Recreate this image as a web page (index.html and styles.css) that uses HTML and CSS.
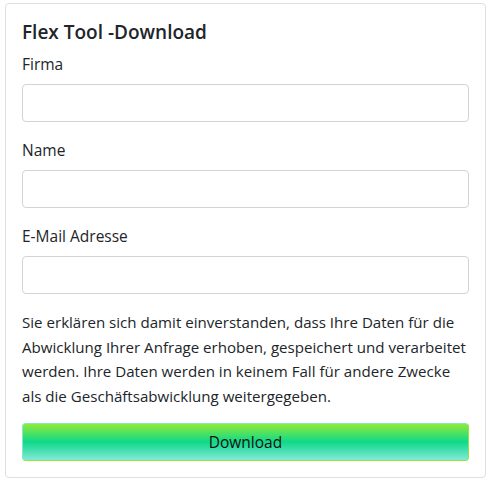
FILE: index.html
```html
<!DOCTYPE html>
<html lang="de">
<head>
<meta charset="utf-8">
<title>Flex Tool -Download</title>
<link rel="stylesheet" href="styles.css">
</head>
<body>
<div class="card">
  <div class="card-body">
    <h5 class="card-title">Flex Tool -Download</h5>
    <div class="form-group">
      <label class="label" for="firma">Firma</label>
      <input class="input" id="firma" type="text">
    </div>
    <div class="form-group">
      <label class="label" for="name">Name</label>
      <input class="input" id="name" type="text">
    </div>
    <div class="form-group">
      <label class="label" for="mail">E-Mail Adresse</label>
      <input class="input" id="mail" type="email">
    </div>
    <p class="notice">Sie erklären sich damit einverstanden, dass Ihre Daten für die Abwicklung Ihrer Anfrage erhoben, gespeichert und verarbeitet werden. Ihre Daten werden in keinem Fall für andere Zwecke als die Geschäftsabwicklung weitergegeben.</p>
    <button class="btn" type="button">Download</button>
  </div>
</div>
</body>
</html>
```
FILE: styles.css
```css
* { box-sizing: border-box; }
html, body { margin: 0; background: #fff; }
body {
  padding: 3px 4px 3px 5px;
  font-family: "Open Sans", "Noto Sans", sans-serif;
  font-size: 16px;
  line-height: 24px;
  color: #212529;
}
.card {
  border: 1px solid #dfdfdf;
  border-radius: 4px;
  background: #fff;
}
.card-body { padding: 16px; }
.card-title {
  margin: 0 0 8px;
  font-size: 19px;
  line-height: 24px;
  font-weight: 600;
}
.form-group { margin-bottom: 16px; }
.label {
  display: block;
  margin-bottom: 8px;
  font-size: 15.5px;
}
.input {
  display: block;
  width: 100%;
  height: 38px;
  border: 1px solid #ced4da;
  border-radius: 4px;
  background: #fff;
  margin: 0;
}
.notice {
  margin: 0 0 15px;
  font-size: 15.1px;
  line-height: 24.5px;
}
.btn {
  display: block;
  width: 100%;
  height: 38px;
  border: 1px solid #86e7c4;
  border-bottom-color: #8de83a;
  border-right-color: #8de83a;
  border-radius: 4px;
  background: linear-gradient(to bottom, #90ea3a 0%, #0ed98a 50%, #84e9d8 100%);
  color: #111;
  font-family: inherit;
  font-size: 15.5px;
  line-height: 24px;
  padding: 0;
}
```
